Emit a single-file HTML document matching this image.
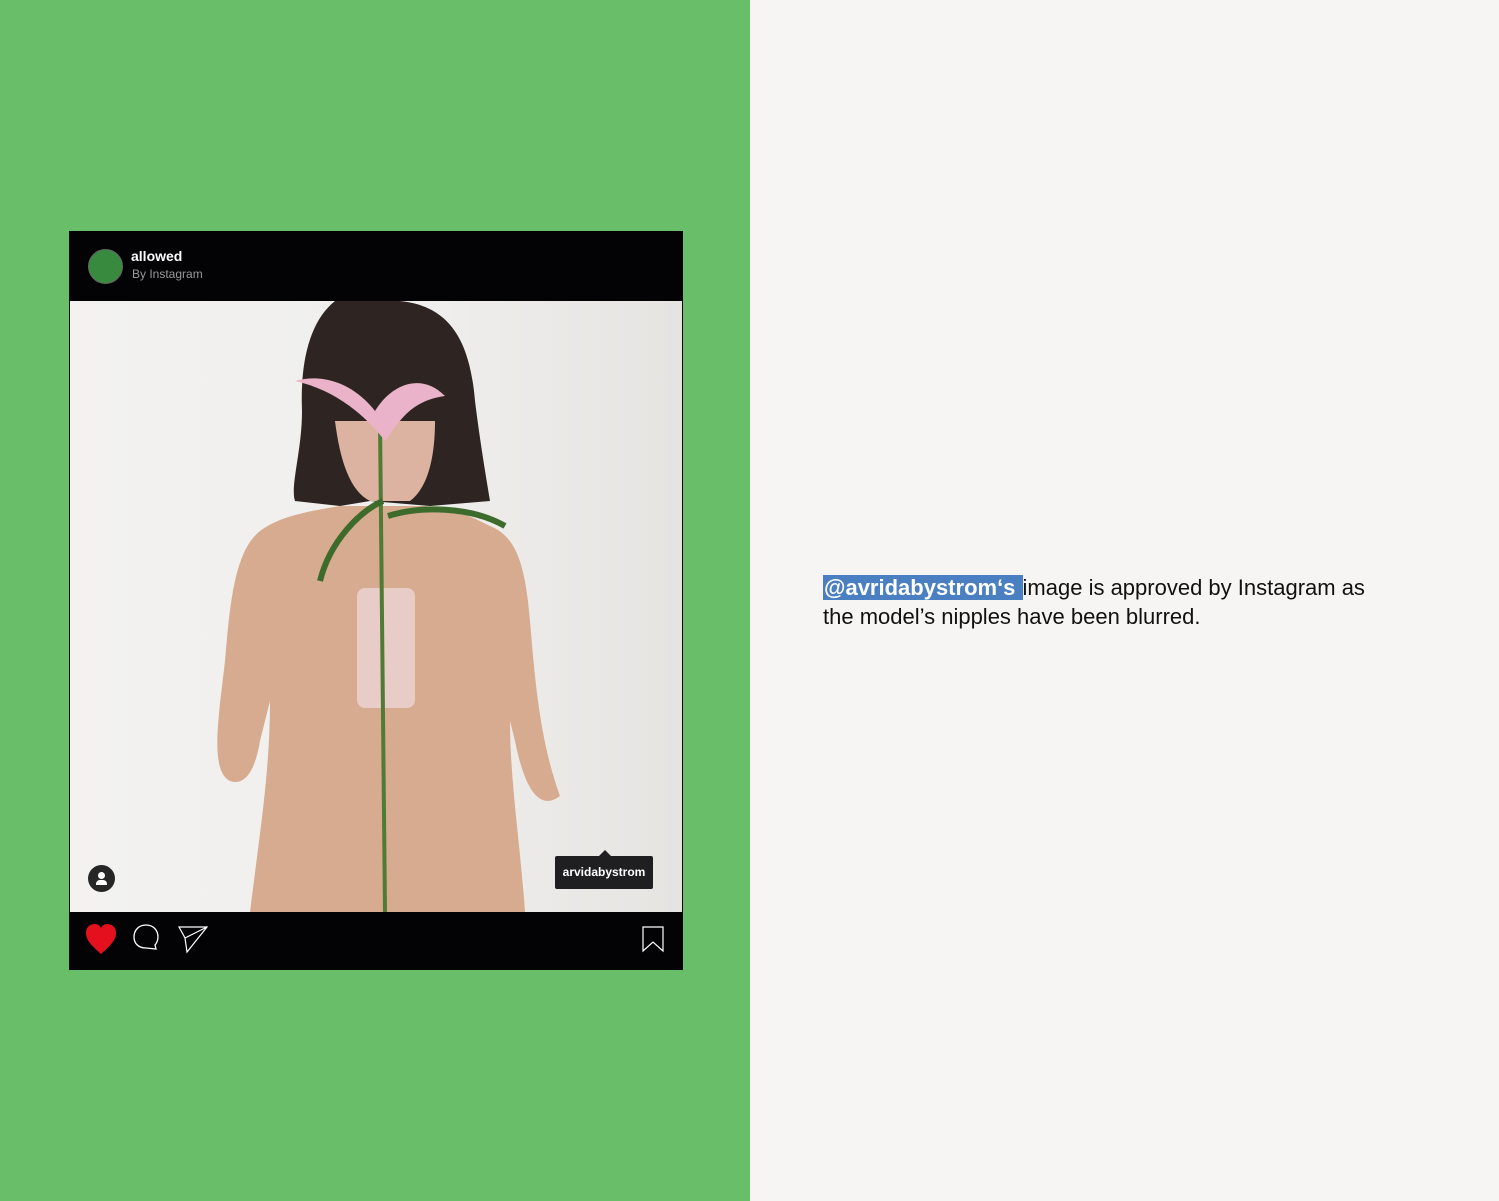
<!DOCTYPE html>
<html><head><style>
body{margin:0;width:1499px;height:1201px;position:relative;background:#f6f5f3;font-family:"Liberation Sans",sans-serif;overflow:hidden}
.green{position:absolute;left:0;top:0;width:750px;height:1201px;background:#68be69}
.card{position:absolute;left:69px;top:231px;width:614px;height:739px;background:#030306}
.hdr{position:absolute;left:0;top:0;width:614px;height:70px}
.av{position:absolute;left:19px;top:18px;width:33px;height:33px;border-radius:50%;background:#388a3f;border:1px solid #666}
.t1{position:absolute;left:62px;top:17px;color:#fff;font-weight:bold;font-size:14px}
.t2{position:absolute;left:63px;top:36px;color:#999;font-size:12px}
.photo{position:absolute;left:1px;top:70px;width:612px;height:611px;background:linear-gradient(90deg,#f3f2f0,#efeeec 60%,#e6e4e1)}
.txt{position:absolute;left:823px;top:573px;font-size:22px;line-height:29px;color:#111;width:560px}
.hl{background:#4a7fc1;color:#fff;font-weight:bold;padding:0 1px}
</style></head><body>
<div class="green"></div>
<div class="card">
 <div class="hdr"><div class="av"></div><div class="t1">allowed</div><div class="t2">By Instagram</div></div>
 <div class="photo">
  <svg width="612" height="611" viewBox="0 0 612 611">
   <path d="M265 0 C240 20 230 60 232 110 C232 150 220 185 225 200 L270 205 L300 200 L360 205 L420 200 C415 170 410 140 405 100 C400 40 380 5 330 0 Z" fill="#2e2522"/>
   <path d="M190 230 C165 250 160 300 155 360 C148 420 140 470 160 480 C175 485 185 470 190 440 L200 400 C200 470 190 530 180 611 L455 611 C450 540 440 480 440 420 L445 440 C455 490 470 510 490 495 C470 440 465 380 460 320 C455 260 445 235 420 225 C400 215 380 205 350 205 L270 205 C240 210 210 215 190 230 Z" fill="#d6ab90"/>
   <path d="M265 120 C270 160 280 190 300 200 L340 200 C360 185 365 150 365 120 Z" fill="#dcb3a0"/>
   <rect x="287" y="287" width="58" height="120" rx="8" fill="#e8ccc8"/>
   <path d="M310 120 L315 611" stroke="#4f7b35" stroke-width="4" fill="none"/>
   <path d="M225 80 C260 70 290 90 305 110 C320 85 350 70 375 95 C340 100 330 120 315 140 C300 120 270 90 225 80 Z" fill="#eab3c9"/>
   <path d="M313 200 C290 210 260 240 250 280 M318 215 C350 205 400 205 435 225" stroke="#3d6b2c" stroke-width="6" fill="none"/>
  </svg>
  <div style="position:absolute;left:18px;top:564px;width:27px;height:27px;border-radius:50%;background:#262626">
   <div style="position:absolute;left:10px;top:7px;width:7px;height:7px;border-radius:50%;background:#fff"></div>
   <div style="position:absolute;left:8px;top:15px;width:11px;height:5px;border-radius:4px 4px 0 0;background:#fff"></div>
  </div>
  <div style="position:absolute;left:485px;top:555px;width:98px;height:33px;background:#1f1f22;border-radius:2px;color:#fff;font-size:12px;font-weight:bold;line-height:33px;text-align:center">arvidabystrom</div>
  <div style="position:absolute;left:529px;top:549px;width:0;height:0;border:6px solid transparent;border-bottom-color:#1f1f22;border-top:0"></div>
 </div>
 <svg style="position:absolute;left:0;top:681px" width="614" height="58">
  <path d="M32 42 C22 33 17 28 17 21 C17 15 21 12 26 12 C29 12 31 14 32 16 C33 14 35 12 38 12 C43 12 47 15 47 21 C47 28 42 33 32 42 Z" fill="#e5101d"/>
  <path d="M77 36 C69 36 65 31 65 25 C65 18 70 13 77 13 C84 13 89 18 89 25 C89 29 87 32 86 33 L87 37 Z" fill="none" stroke="#fff" stroke-width="1.3"/>
  <path d="M110 15 L138 15 L118 40 L116 26 Z M116 26 L138 15" fill="none" stroke="#fff" stroke-width="1.2"/>
  <path d="M574 15 L594 15 L594 39 L584 30 L574 39 Z" fill="none" stroke="#fff" stroke-width="1.2"/>
 </svg>
</div>
<div class="txt"><span class="hl">@avridabystrom‘s </span> image is approved by Instagram as the model’s nipples have been blurred.</div>
</body></html>
